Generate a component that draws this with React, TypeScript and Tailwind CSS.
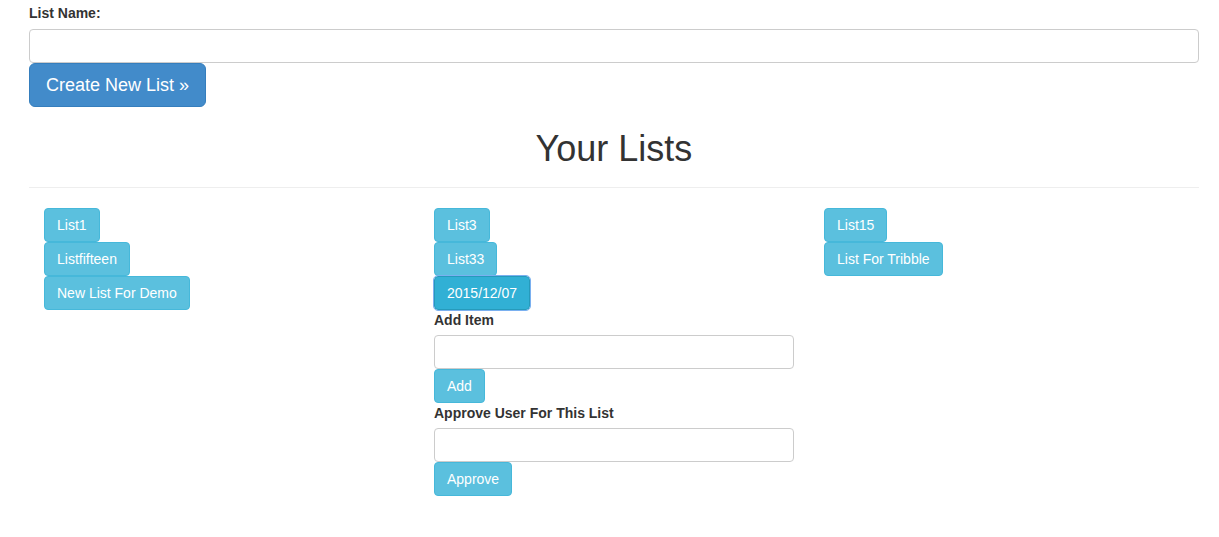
import React from 'react';

const font = { fontFamily: '"Liberation Sans", Arial, sans-serif' };

const infoBtn =
  'block h-[34px] px-[12px] rounded-[4px] border border-[#46b8da] bg-[#5bc0de] text-white text-[14px] leading-[20px]';

const ListButton = ({ label, active }: { label: string; active?: boolean }) => (
  <button
    className={
      active
        ? 'block h-[34px] px-[12px] rounded-[4px] border border-[#269abc] bg-[#31b0d5] text-white text-[14px] leading-[20px] outline outline-1 outline-[#7ab0f0]'
        : infoBtn
    }
  >
    {label}
  </button>
);

const Field = ({ label, action }: { label: string; action: string }) => (
  <div>
    <label className="block mb-[5px] text-[14px] font-bold leading-[20px] text-[#333]">{label}</label>
    <input className="block w-full h-[34px] rounded-[4px] border border-[#ccc] bg-white px-3" />
    <button className={infoBtn}>{action}</button>
  </div>
);

export default function App() {
  const col1 = ['List1', 'Listfifteen', 'New List For Demo'];
  const col2 = ['List3', 'List33'];
  const col3 = ['List15', 'List For Tribble'];

  return (
    <div style={font} className="bg-white text-[#333] min-h-[537px]">
      <div className="ml-[29px] w-[1170px] pt-[3px]">
        <label className="block mb-[6px] text-[14px] font-bold leading-[20px]">List Name:</label>
        <input className="block w-full h-[34px] rounded-[4px] border border-[#ccc] bg-white px-3" />
        <button className="block h-[44px] px-[16px] rounded-[6px] border border-[#357ebd] bg-[#428bca] text-white text-[18px] leading-[24px]">
          Create New List »
        </button>

        <h1 className="mt-[22px] text-center text-[36px] leading-[40px] font-normal">Your Lists</h1>
        <hr className="mt-[18px] mb-[20px] border-0 border-t border-[#eee]" />

        <div className="grid grid-cols-3">
          <div className="px-[15px]">
            {col1.map((l) => (
              <ListButton key={l} label={l} />
            ))}
          </div>
          <div className="px-[15px]">
            {col2.map((l) => (
              <ListButton key={l} label={l} />
            ))}
            <ListButton label="2015/12/07" active />
            <Field label="Add Item" action="Add" />
            <Field label="Approve User For This List" action="Approve" />
          </div>
          <div className="px-[15px]">
            {col3.map((l) => (
              <ListButton key={l} label={l} />
            ))}
          </div>
        </div>
      </div>
    </div>
  );
}
